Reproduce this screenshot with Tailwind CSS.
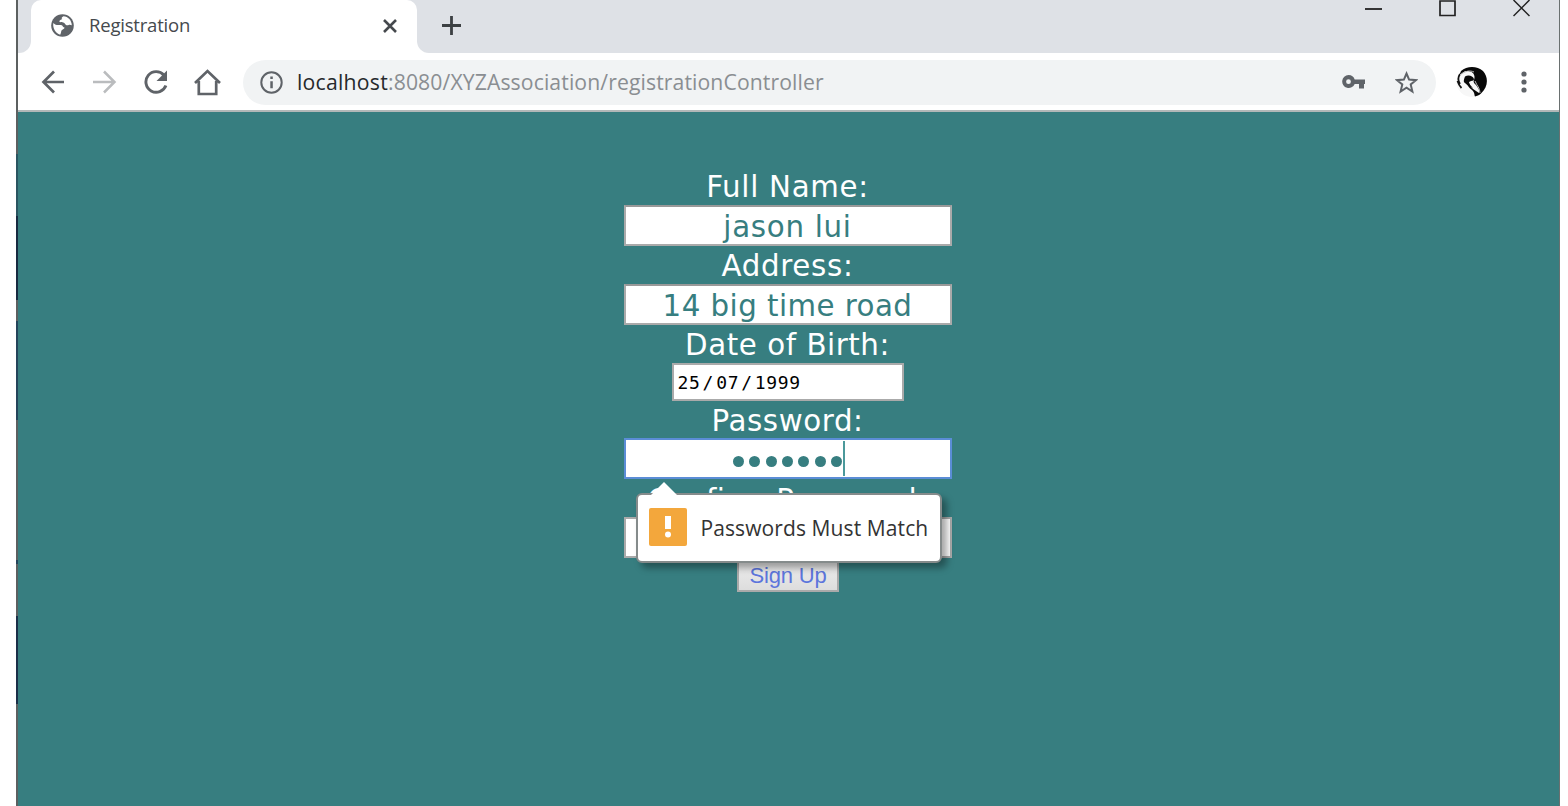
<!DOCTYPE html>
<html lang="en">
<head>
<meta charset="utf-8">
<title>Registration</title>
<script src="https://cdn.jsdelivr.net/npm/@tailwindcss/browser@4"></script>
</head>
<body class="bg-white">
<div class="w-[1568px] h-[806px] overflow-hidden flex pl-4 pr-2">
  <div class="w-[2px] shrink-0 flex flex-col bg-[#5c6060]">
    <div class="h-[154px]"></div>
    <div class="h-[62px] bg-[#2a5560]"></div>
    <div class="h-[84px] bg-[#172a40]"></div>
    <div class="h-[21px]"></div>
    <div class="h-[99px] bg-[#25445a]"></div>
    <div class="h-[140px]"></div>
    <div class="h-[4px] bg-[#25445a]"></div>
    <div class="h-[52px]"></div>
    <div class="h-[88px] bg-[#1b2f48]"></div>
  </div>
  <div class="flex-1 flex flex-col border-r border-[#6a7070]">
    <header class="h-[53px] shrink-0 bg-white flex">
      <div class="w-[13px] bg-[#dee1e6] rounded-br-[12px]"></div>
      <div class="w-[386px] bg-[#dee1e6]">
        <div class="h-full bg-white rounded-t-[10px] flex items-center pl-5 pb-[2px]">
          <svg class="w-[23px] h-[23px] shrink-0" viewBox="0 0 23 23"><circle cx="11.5" cy="11.5" r="11.3" fill="#5f6368"/><path d="M2.300 9C5 11.800 7 10.800 10 11c2.200.3 1.200 2 3.500 2.400-.2 2.200-3 1.500-3.300 4-.1 1.300-.6 2.400-1 3.300C4.500 19.500 1.500 14 2.300 9ZM12.500 2.200c-1.800 1-2.500 2-1.200 2.800-1.300 1-3 .8-3 2.800 2 1 4.500-.3 5.800 2.300.8 1.500 2.600 1.500 3.600.8 1.200-.6 2 0 3.100.3C20.800 6.500 17 2.300 12.500 2.200Z" fill="#fff"/></svg>
          <span class="ml-[15px] w-[294px] shrink-0 font-['Open_Sans',sans-serif] text-[18.500px] tracking-[-0.200px] text-[#45494d] leading-none">Registration</span>
          <svg class="w-[14px] h-[14px] shrink-0" viewBox="0 0 14 14" stroke="#45494d" stroke-width="2.600"><path d="M1 1 13 13M13 1 1 13"/></svg>
        </div>
      </div>
      <div class="flex-1 bg-[#dee1e6] rounded-bl-[12px] flex justify-between">
        <svg class="ml-[25px] mt-[16px] w-[19px] h-[19px]" viewBox="0 0 19 19" stroke="#3c4043" stroke-width="2.800"><path d="M9.500 0V19M0 9.500H19"/></svg>
        <div class="flex pr-[29px] gap-[57px]">
          <svg class="w-[17px] h-[17px]" viewBox="0 0 17 17"><path d="M0 9H17" stroke="#222" stroke-width="1.800"/></svg>
          <svg class="w-[17px] h-[17px]" viewBox="0 0 17 17"><path d="M1 1H16V15.500H1Z" fill="none" stroke="#222" stroke-width="1.700"/></svg>
          <svg class="w-[17px] h-[17px]" viewBox="0 0 17 17"><path d="M.5 0 16.500 16M16.500 0 .5 16" stroke="#222" stroke-width="1.500"/></svg>
        </div>
      </div>
    </header>
    <nav class="h-[59px] shrink-0 bg-white border-b-2 border-[#b2b8b8] flex items-center pl-[23px] pr-[31px] pt-px">
      <svg class="w-[24px] h-[24px]" viewBox="0 0 24 24" fill="none" stroke="#5f6368" stroke-width="2.700"><path d="M23 12H3M13 1.500 2.500 12 13 22.500"/></svg>
      <svg class="ml-[28px] w-[24px] h-[24px]" viewBox="0 0 24 24" fill="none" stroke="#babcbe" stroke-width="2.500"><path d="M0 12H21M11 1.500 21.500 12 11 22.500"/></svg>
      <svg class="ml-[27px] w-[24px] h-[24px]" viewBox="0 0 24 24"><path d="M20 5.200A10.300 10.300 0 1 0 21.900 15.500" fill="none" stroke="#5f6368" stroke-width="2.900"/><path d="M23 .5V11H12.500Z" fill="#5f6368"/></svg>
      <svg class="ml-[26px] w-[27px] h-[27px]" viewBox="0 0 27 27" fill="none" stroke="#5f6368" stroke-width="2.700"><path d="M1 14 13.500 2 26 14M4.800 12V25H22.200V12"/></svg>
      <div class="ml-[22px] w-[1193px] h-[45px] rounded-full bg-[#f1f3f4] flex items-center pl-[17px] pr-[18px]">
        <svg class="w-[23px] h-[23px] shrink-0" viewBox="0 0 23 23"><circle cx="11.500" cy="11.500" r="10.200" fill="none" stroke="#5f6368" stroke-width="2"/><path d="M10.300 10.200h2.500v7h-2.500zM10.300 5.500h2.500v2.500h-2.500z" fill="#5f6368"/></svg>
        <span class="ml-[14px] flex-1 whitespace-nowrap font-['Open_Sans',sans-serif] text-[21.200px] leading-none text-[#8a8e92]"><span class="text-[#26292c] tracking-[0.250px]">localhost</span><span class="tracking-[0.100px]">:8080/XYZAssociation/registrationController</span></span>
        <svg class="w-[23px] h-[14px]" viewBox="0 0 23 14"><path fill="#5f6368" fill-rule="evenodd" d="M6.500 0a6.500 6.500 0 0 1 6.200 4.500H23V9h-1v4.500h-5V9h-4.300A6.500 6.500 0 1 1 6.500 0Zm0 4.300a2.400 2.400 0 1 0 0 4.800 2.400 2.400 0 0 0 0-4.800Z"/></svg>
        <svg class="ml-[30px] w-[23px] h-[23px]" viewBox="0 0 23 23"><path d="M11.500 2.500 14.100 8.600 21 9.200 15.700 13.500 17.400 20.500 11.500 16.700 5.600 20.500 7.300 13.500 2 9.200 8.900 8.600Z" fill="none" stroke="#5f6368" stroke-width="2"/></svg>
      </div>
      <svg class="ml-[20px] w-[32px] h-[32px] shrink-0" viewBox="0 0 32 32"><circle cx="15.500" cy="16" r="15" fill="#f7f7f7"/><path d="M5 5C11-.5 21-.5 27 5c5.500 6 5.500 16-2 22.500-2 1.800-4 2.500-6 3C18 28 19 27 16 24c-3-2-4-4-5-6l2-1c1 4 4 6 7 8l3 2c1-3-1-5-3-8-2-2-3-3-2-5C20 8 16 5 11 5c-3 0-5 2-8 5Z" fill="#080808"/><path d="M9 10.500c3-2 8-1 9 2.500 0 1-1 2-3 2l-2 1c0 2 2 4 4 6-3-1-6-3-8-5-2-1-1-4 0-6.500Z" fill="#080808"/><path d="M1.500 15c1 3 2 5 4 7M4 8C2 11 2 15 4 18" fill="none" stroke="#111" stroke-width="1.800"/><path d="M4 9c5-4 10-5 14-3M19 15c2 5 5 7 5 12" fill="none" stroke="#bbb" stroke-width="1"/></svg>
      <svg class="ml-[33px] w-[6px] h-[22px] shrink-0" viewBox="0 0 6 22" fill="#5f6368"><circle cx="3" cy="3" r="2.600"/><circle cx="3" cy="11" r="2.600"/><circle cx="3" cy="19" r="2.600"/></svg>
    </nav>
    <main class="flex-1 bg-[#377e80] pt-[55px] flex flex-col items-center font-['DejaVu_Sans',sans-serif] text-[29.300px] text-white">
      <form class="relative w-[328px] flex flex-col items-center -translate-x-px whitespace-nowrap tracking-[0.700px]">
        <label class="h-[38px] leading-[41px]">Full Name:</label>
        <div class="w-full h-[41px] bg-white border-2 border-[#aaa] border-t-[#999] text-[#377e80] leading-[41px] text-center overflow-hidden"><div class="h-[36px] overflow-hidden">jason lui</div></div>
        <label class="h-[38px] leading-[40px]">Address:</label>
        <div class="w-full h-[41px] bg-white border-2 border-[#aaa] border-t-[#999] text-[#377e80] leading-[41px] text-center overflow-hidden tracking-[0.450px]"><div class="h-[36px] overflow-hidden">14 big time road</div></div>
        <label class="h-[38px] leading-[40px] tracking-[0.550px]">Date of Birth:</label>
        <div class="w-[232px] h-[38px] bg-white border-2 border-[#aaa] text-black pl-[4px] flex items-center font-['DejaVu_Sans_Mono',monospace] text-[18px]"><span>25</span><span class="mx-[2px]">/</span><span>07</span><span class="mx-[2px]">/</span><span>1999</span></div>
        <label class="h-[37px] leading-[40px] tracking-[0.600px]">Password:</label>
        <div class="w-full h-[41px] bg-white border-2 border-[#5b8dd6] flex items-center justify-center">
          <div class="flex gap-[5.300px] mt-[5px] ml-[3px]"><i class="size-[11px] rounded-full bg-[#377e80]"></i><i class="size-[11px] rounded-full bg-[#377e80]"></i><i class="size-[11px] rounded-full bg-[#377e80]"></i><i class="size-[11px] rounded-full bg-[#377e80]"></i><i class="size-[11px] rounded-full bg-[#377e80]"></i><i class="size-[11px] rounded-full bg-[#377e80]"></i><i class="size-[11px] rounded-full bg-[#377e80]"></i></div>
          <i class="w-[2px] h-[35px] bg-[#4b999b] ml-px"></i>
        </div>
        <label class="h-[38px] leading-[42px] tracking-[0.500px]">Confirm Password:</label>
        <div class="w-full h-[41px] bg-white border-2 border-[#aaa]"></div>
        <button type="button" class="ml-px w-[102px] h-[34px] bg-linear-to-b from-[#eee] to-[#ddd] border-2 border-[#aaa] text-[#5c75dc] font-['Liberation_Sans',sans-serif] text-[22px] leading-[32px] tracking-[-0.200px]">Sign Up</button>
        <div class="absolute left-[12px] top-[326px] w-[306px] h-[70px] rounded-[6px] bg-white border-2 border-[#858b8b] shadow-[5px_5px_7px_rgba(0,0,0,0.35)] flex items-center pl-[11px] pb-[3px]">
          <svg class="absolute left-[12px] top-[-13px] w-[28px] h-[14px]" viewBox="0 0 28 14"><path d="M0 14 14 0 28 14Z" fill="#fff"/></svg>
          <svg class="w-[38px] h-[38px] shrink-0" viewBox="0 0 38 38"><rect width="38" height="38" rx="2" fill="#f3a73c"/><path d="M16 8H22V21H16Z" fill="#fff"/><circle cx="19" cy="26.500" r="3" fill="#fff"/></svg>
          <span class="ml-[14px] mt-[3px] font-['Open_Sans',sans-serif] text-[21px] text-[#333] tracking-[0.100px] leading-none">Passwords Must Match</span>
        </div>
      </form>
    </main>
  </div>
</div>
</body>
</html>
